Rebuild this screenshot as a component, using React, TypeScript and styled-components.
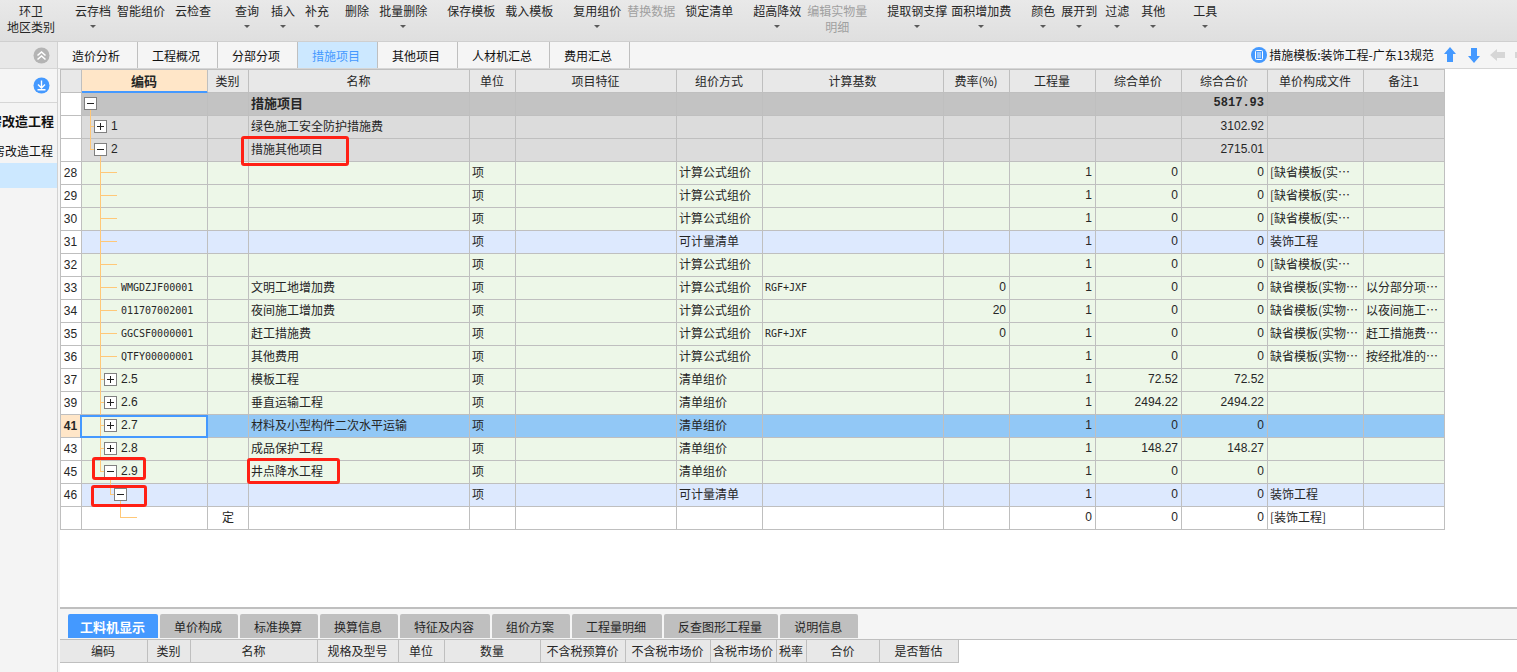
import React from 'react';
import styled, { createGlobalStyle, css } from 'styled-components';

const GlobalStyle = createGlobalStyle`
  *, *::before, *::after { box-sizing: border-box; }
  body {
    margin: 0;
    background: #f5f5f5;
    color: #262626;
    font: 12px/16px 'Noto Sans CJK SC', sans-serif;
  }
  button { font: inherit; color: inherit; background: none; border: 0; padding: 0; }
`;

const LINE = '#bfbfbf';
const BLUE = '#4499ff';
const ORANGE = '#ffc878';

const Page = styled.div`
  display: flex;
  flex-direction: column;
  min-height: 100vh;
  overflow: hidden;
`;

/* ---------- ribbon ---------- */

const Ribbon = styled.header`
  display: flex;
  align-items: flex-start;
  height: 42px;
  padding: 3px 0 0 7px;
  background: linear-gradient(#e9e9e9, #dfdfdf);
  border-bottom: 1px solid #cfcfcf;
`;

const RibbonButton = styled.button<{ $gap: number }>`
  flex: none;
  display: flex;
  flex-direction: column;
  align-items: center;
  margin-left: ${(p) => p.$gap}px;
  white-space: nowrap;
  &:disabled { color: #a0a0a0; }
`;

const Caret = styled.span`
  margin-top: 6px;
  border: 3px solid transparent;
  border-top-color: #5a5a5a;
  border-bottom: 0;
`;

type RibbonItem = { label: string; second?: string; caret?: boolean; off?: boolean; gap: number };

const ribbon: RibbonItem[] = [
  { label: '环卫', second: '地区类别', gap: 0 },
  { label: '云存档', caret: true, gap: 20 },
  { label: '智能组价', gap: 6 },
  { label: '云检查', gap: 10 },
  { label: '查询', caret: true, gap: 24 },
  { label: '插入', caret: true, gap: 12 },
  { label: '补充', caret: true, gap: 10 },
  { label: '删除', gap: 16 },
  { label: '批量删除', caret: true, gap: 10 },
  { label: '保存模板', gap: 20 },
  { label: '载入模板', gap: 10 },
  { label: '复用组价', caret: true, gap: 20 },
  { label: '替换数据', off: true, gap: 6 },
  { label: '锁定清单', gap: 10 },
  { label: '超高降效', caret: true, gap: 20 },
  { label: '编辑实物量', second: '明细', off: true, gap: 6 },
  { label: '提取钢支撑', caret: true, gap: 20 },
  { label: '面积增加费', caret: true, gap: 4 },
  { label: '颜色', caret: true, gap: 20 },
  { label: '展开到', caret: true, gap: 6 },
  { label: '过滤', caret: true, gap: 8 },
  { label: '其他', caret: true, gap: 12 },
  { label: '工具', caret: true, gap: 28 },
];

/* ---------- body frame ---------- */

const Body = styled.div`
  flex: 1;
  display: flex;
`;

const Sidebar = styled.aside`
  flex: none;
  width: 58px;
  background: #f4f4f4;
  border-right: 1px solid #d2d2d2;
`;

const SideHead = styled.div<{ $tall?: boolean }>`
  display: flex;
  align-items: center;
  justify-content: flex-end;
  height: ${(p) => (p.$tall ? 34 : 27)}px;
  padding-right: 7px;
  background: ${(p) => (p.$tall ? '#f5f5f5' : '#e8e8e8')};
  border-bottom: 1px solid #d6d6d6;
`;

const IconButton = styled.button`
  display: flex;
  svg { display: block; }
`;

const SideItem = styled.div<{ $bold?: boolean }>`
  display: flex;
  align-items: center;
  justify-content: flex-end;
  height: 30px;
  padding-top: 6px;
  padding-right: 4px;
  overflow: hidden;
  white-space: nowrap;
  color: #111;
  ${(p) => p.$bold && css`padding-right: 3px; font-size: 13px; font-weight: 700;`}
`;

const SideSelected = styled.div`
  height: 25px;
  background: #cce8ff;
`;

const Main = styled.main`
  flex: 1;
  min-width: 0;
  display: flex;
  flex-direction: column;
`;

/* ---------- page tabs ---------- */

const TabBar = styled.nav`
  display: flex;
  align-items: center;
  height: 27px;
  background: #f5f5f5;
  border-bottom: 1px solid #d6d6d6;
  overflow: hidden;
`;

const Tab = styled.button<{ $active?: boolean }>`
  flex: none;
  align-self: stretch;
  padding: 2px 17px 0 14px;
  border-right: 1px solid ${LINE};
  color: ${(p) => (p.$active ? BLUE : '#111')};
  background: ${(p) => (p.$active ? '#cce8ff' : 'transparent')};
`;

const TemplateTools = styled.div`
  flex: none;
  display: flex;
  align-items: center;
  margin-left: auto;
  margin-right: -13px;
  color: #111;
`;

const TemplateButton = styled.button`
  display: flex;
  align-items: center;
  gap: 2px;
  margin-right: 8px;
`;

const ArrowButton = styled.button`
  display: flex;
  margin-right: 8px;
  &:last-child { margin-right: 0; }
`;

const tabs = ['造价分析', '工程概况', '分部分项', '措施项目', '其他项目', '人材机汇总', '费用汇总'];

const ARROW = 'M8 0 L14 7 H11 V15 H5 V7 H2 Z';

const Arrow = ({ turn, color }: { turn: number; color: string }) => (
  <svg width="16" height="16" viewBox="0 0 16 16" aria-hidden="true">
    <path d={ARROW} fill={color} transform={`rotate(${turn} 8 8)`} />
  </svg>
);

/* ---------- main grid ---------- */

const GridPanel = styled.section`
  flex: 1;
  margin-left: 2px;
  background: #fff;
`;

const Grid = styled.table`
  width: 1385px;
  table-layout: fixed;
  border-collapse: separate;
  border-spacing: 0;
  border-left: 1px solid ${LINE};
`;

const HeadCell = styled.th<{ $current?: boolean }>`
  height: 24px;
  padding: 0 1px 1px 0;
  text-align: center;
  font-weight: 400;
  white-space: nowrap;
  background: #e8e8e8;
  border: solid ${LINE};
  border-width: 1px 1px 1px 0;
  ${(p) =>
    p.$current &&
    css`
      font-size: 13px;
      font-weight: 700;
      background: #ffe6c8;
      border-bottom-color: ${BLUE};
      box-shadow: inset 0 -1px ${BLUE};
    `}
`;

type Tone = 'root' | 'group' | 'green' | 'blue' | 'picked' | 'white';

const toneColor: Record<Tone, string> = {
  root: '#c3c3c3',
  group: '#dcdcdc',
  green: '#edf7e8',
  blue: '#dde9fe',
  picked: '#92c8f6',
  white: '#ffffff',
};

const Row = styled.tr<{ $tone: Tone }>`
  background: ${(p) => toneColor[p.$tone]};
  ${(p) => p.$tone === 'root' && css`font-size: 13px; font-weight: 700;`}
`;

const Cell = styled.td<{ $align?: 'left' | 'right' | 'center' }>`
  position: relative;
  height: 23px;
  padding: 0 2px 2px;
  text-align: ${(p) => p.$align || 'left'};
  white-space: nowrap;
  border: solid ${LINE};
  border-width: 0 1px 1px 0;
`;

const NumCell = styled(Cell)<{ $bold?: boolean }>`
  padding-right: 3px;
  font-family: ${(p) => (p.$bold ? "'Liberation Mono', monospace" : "'Liberation Sans', sans-serif")};
  font-size: 12px;
`;

const RowNumber = styled.th<{ $current?: boolean }>`
  height: 23px;
  padding: 0 1px 0 0;
  font: ${(p) => (p.$current ? 700 : 400)} 12px/16px 'Liberation Sans', sans-serif;
  background: ${(p) => (p.$current ? '#ffe6c8' : '#fff')};
  border: solid ${LINE};
  border-width: 0 1px 1px 0;
`;

const TreeCell = styled(Cell)<{ $focused?: boolean }>`
  padding: 0 0 0 2px;
  ${(p) =>
    p.$focused &&
    css`
      background: ${toneColor.green};
      &::after {
        content: '';
        position: absolute;
        z-index: 1;
        inset: 0 -1px -1px -2px;
        border: 2px solid ${BLUE};
      }
    `}
`;

const TreeLine = styled.div`
  display: flex;
  height: 22px;
`;

type Guide = 'blank' | 'tee' | 'corner';

const GuideBox = styled.span<{ $kind: Guide }>`
  position: relative;
  flex: none;
  width: 10px;
  ${(p) =>
    p.$kind !== 'blank' &&
    css`
      &::before {
        content: '';
        position: absolute;
        left: 6px;
        top: 0;
        width: 1px;
        height: ${p.$kind === 'tee' ? 23 : 11}px;
        background: ${ORANGE};
      }
      &::after {
        content: '';
        position: absolute;
        left: 6px;
        right: 0;
        top: 10px;
        height: 1px;
        background: ${ORANGE};
      }
    `}
`;

const LeafStub = styled.span`
  flex: none;
  width: 13px;
  height: 1px;
  margin-top: 10px;
  background: ${ORANGE};
`;

const Toggle = styled.button<{ $open: boolean }>`
  position: relative;
  flex: none;
  width: 13px;
  height: 13px;
  margin-top: 4px;
  && { background: #fff; border: 1px solid #808080; }
  svg { display: block; }
  ${(p) =>
    p.$open &&
    css`
      &::after {
        content: '';
        position: absolute;
        left: 5px;
        top: 12px;
        width: 1px;
        height: 6px;
        background: ${ORANGE};
      }
    `}
`;

const Code = styled.span<{ $long: boolean }>`
  margin-left: 4px;
  font: ${(p) =>
    p.$long ? "10px/21px 'DejaVu Sans Mono', monospace" : "12px/21px 'Liberation Sans', sans-serif"};
`;

const Formula = styled.span`
  font: 10px/16px 'DejaVu Sans Mono', monospace;
`;

/* red rectangle drawn over the cell it points at */
const Mark = styled.span<{ $box: [number, number, number, number] }>`
  position: absolute;
  z-index: 2;
  left: ${(p) => p.$box[0]}px;
  top: ${(p) => p.$box[1]}px;
  width: ${(p) => p.$box[2]}px;
  height: ${(p) => p.$box[3]}px;
  border: 3px solid #ff2015;
  border-radius: 3px;
  pointer-events: none;
`;

const columns: [string, number][] = [
  ['', 21], ['编码', 126], ['类别', 41], ['名称', 221], ['单位', 46], ['项目特征', 161],
  ['组价方式', 86], ['计算基数', 181], ['费率(%)', 66], ['工程量', 86], ['综合单价', 86],
  ['综合合价', 86], ['单价构成文件', 96], ['备注1', 81],
];

type Item = {
  no?: string;
  tone: Tone;
  guides: Guide[];
  toggle?: 'open' | 'closed';
  code?: string;
  kind?: string;
  name?: string;
  unit?: string;
  method?: string;
  base?: string;
  rate?: string;
  qty?: string;
  price?: string;
  total?: string;
  file?: string;
  note?: string;
  codeMark?: [number, number, number, number];
  nameMark?: [number, number, number, number];
};

const leaf = (no: string, rest: Partial<Item>): Item => ({
  no, tone: 'green', guides: ['blank', 'tee'], unit: '项', method: '计算公式组价',
  qty: '1', price: '0', total: '0', ...rest,
});

const section = (no: string, code: string, name: string, sum: string, rest: Partial<Item> = {}): Item => ({
  no, code, name, tone: 'green', guides: ['blank', 'tee'], toggle: 'closed', unit: '项',
  method: '清单组价', qty: '1', price: sum, total: sum, ...rest,
});

const shortFile = '[缺省模板(实…';
const longFile = '缺省模板(实物…';

const items: Item[] = [
  { tone: 'root', guides: [], toggle: 'open', name: '措施项目', total: '5817.93' },
  { tone: 'group', guides: ['tee'], toggle: 'closed', code: '1', name: '绿色施工安全防护措施费', total: '3102.92' },
  { tone: 'group', guides: ['corner'], toggle: 'open', code: '2', name: '措施其他项目', total: '2715.01', nameMark: [-8, -3, 108, 30] },
  leaf('28', { file: shortFile }),
  leaf('29', { file: shortFile }),
  leaf('30', { file: shortFile }),
  leaf('31', { tone: 'blue', method: '可计量清单', file: '装饰工程' }),
  leaf('32', { file: shortFile }),
  leaf('33', { code: 'WMGDZJF00001', name: '文明工地增加费', base: 'RGF+JXF', rate: '0', file: longFile, note: '以分部分项…' }),
  leaf('34', { code: '011707002001', name: '夜间施工增加费', rate: '20', file: longFile, note: '以夜间施工…' }),
  leaf('35', { code: 'GGCSF0000001', name: '赶工措施费', base: 'RGF+JXF', rate: '0', file: longFile, note: '赶工措施费…' }),
  leaf('36', { code: 'QTFY00000001', name: '其他费用', file: longFile, note: '按经批准的…' }),
  section('37', '2.5', '模板工程', '72.52'),
  section('39', '2.6', '垂直运输工程', '2494.22'),
  section('41', '2.7', '材料及小型构件二次水平运输', '0', { tone: 'picked' }),
  section('43', '2.8', '成品保护工程', '148.27'),
  section('45', '2.9', '井点降水工程', '0', {
    guides: ['blank', 'corner'], toggle: 'open', codeMark: [10, -4, 54, 23], nameMark: [-2, -3, 93, 26],
  }),
  section('46', '', '', '0', {
    tone: 'blue', guides: ['blank', 'blank', 'corner'], toggle: 'open', method: '可计量清单',
    file: '装饰工程', codeMark: [9, 1, 56, 22],
  }),
  { tone: 'white', guides: ['blank', 'blank', 'blank', 'corner'], kind: '定', qty: '0', price: '0', total: '0', file: '[装饰工程]' },
];

const ItemRow = ({ item }: { item: Item }) => {
  const picked = item.tone === 'picked';
  return (
    <Row $tone={item.tone}>
      <RowNumber scope="row" $current={picked}>{item.no}</RowNumber>
      <TreeCell $focused={picked}>
        <TreeLine>
          {item.guides.map((g, i) => <GuideBox key={i} $kind={g} />)}
          {item.toggle ? (
            <Toggle $open={item.toggle === 'open'} aria-label={item.toggle === 'open' ? '折叠' : '展开'}>
              <svg width="11" height="11" viewBox="0 0 11 11" aria-hidden="true">
                <path d="M2 5h7v1H2z" fill="#222" />
                {item.toggle === 'closed' && <path d="M5 2h1v7H5z" fill="#222" />}
              </svg>
            </Toggle>
          ) : (
            <LeafStub />
          )}
          {item.code && <Code $long={item.code.length > 3}>{item.code}</Code>}
        </TreeLine>
        {item.codeMark && <Mark $box={item.codeMark} />}
      </TreeCell>
      <Cell $align="center">{item.kind}</Cell>
      <Cell>
        {item.name}
        {item.nameMark && <Mark $box={item.nameMark} />}
      </Cell>
      <Cell>{item.unit}</Cell>
      <Cell />
      <Cell>{item.method}</Cell>
      <Cell>{item.base && <Formula>{item.base}</Formula>}</Cell>
      <NumCell $align="right">{item.rate}</NumCell>
      <NumCell $align="right">{item.qty}</NumCell>
      <NumCell $align="right">{item.price}</NumCell>
      <NumCell $align="right" $bold={item.tone === 'root'}>{item.total}</NumCell>
      <Cell>{item.file}</Cell>
      <Cell>{item.note}</Cell>
    </Row>
  );
};

/* ---------- detail panel ---------- */

const Detail = styled.section`
  flex: none;
  margin-left: 2px;
  min-height: 65px;
  background: #fff;
  border-top: 2px solid ${LINE};
`;

const DetailTabs = styled.nav`
  display: flex;
  gap: 2px;
  height: 31px;
  padding: 5px 8px 1px;
  background: #f5f5f5;
  border-bottom: 1px solid ${LINE};
`;

const DetailTab = styled.button<{ $active?: boolean }>`
  && {
    padding: 2px 16px 0 14px;
    background: ${LINE};
    border-radius: 2px 2px 0 0;
    white-space: nowrap;
    ${(p) =>
      p.$active &&
      css`
        padding: 2px 13px 0 12px;
        background: ${BLUE};
        color: #fff;
        font-size: 13px;
        font-weight: 700;
      `}
  }
`;

const DetailGrid = styled.table`
  width: 899px;
  table-layout: fixed;
  border-collapse: separate;
  border-spacing: 0;
`;

const DetailHead = styled(HeadCell)`
  height: 23px;
  border-top: 0;
`;

const detailTabs = ['工料机显示', '单价构成', '标准换算', '换算信息', '特征及内容', '组价方案', '工程量明细', '反查图形工程量', '说明信息'];

const detailColumns: [string, number][] = [
  ['编码', 88], ['类别', 43], ['名称', 127], ['规格及型号', 81], ['单位', 46], ['数量', 96],
  ['不含税预算价', 85], ['不含税市场价', 85], ['含税市场价', 66], ['税率', 30], ['合价', 73], ['是否暂估', 79],
];

export default function App() {
  return (
    <Page lang="zh-CN">
      <GlobalStyle />
      <Ribbon>
        {ribbon.map((b) => (
          <RibbonButton key={b.label} $gap={b.gap} disabled={b.off}>
            <span>{b.label}</span>
            {b.second && <span>{b.second}</span>}
            {b.caret && <Caret />}
          </RibbonButton>
        ))}
      </Ribbon>
      <Body>
        <Sidebar>
          <SideHead>
            <IconButton aria-label="收起">
              <svg width="17" height="17" viewBox="0 0 17 17" aria-hidden="true">
                <circle cx="8.5" cy="8.5" r="8" fill="#b4b4b4" />
                <path d="M4.5 8.5 8.5 5 12.5 8.5M4.5 12.5 8.5 9 12.5 12.5" fill="none" stroke="#fff" strokeWidth="1.6" />
              </svg>
            </IconButton>
          </SideHead>
          <SideHead $tall>
            <IconButton aria-label="下载">
              <svg width="17" height="17" viewBox="0 0 17 17" aria-hidden="true">
                <circle cx="8.5" cy="8.5" r="8" fill={BLUE} />
                <path d="M8.5 3.5v7M5 7.5 8.5 11 12 7.5M4.5 12.7h8" fill="none" stroke="#fff" strokeWidth="1.4" />
              </svg>
            </IconButton>
          </SideHead>
          <SideItem $bold>房改造工程</SideItem>
          <SideItem>房改造工程</SideItem>
          <SideSelected />
        </Sidebar>
        <Main>
          <TabBar>
            {tabs.map((t) => <Tab key={t} $active={t === '措施项目'}>{t}</Tab>)}
            <TemplateTools>
              <TemplateButton>
                <svg width="16" height="16" viewBox="0 0 16 16" aria-hidden="true">
                  <circle cx="8" cy="8" r="8" fill={BLUE} />
                  <rect x="4.5" y="3.5" width="7" height="9" rx="1" fill="none" stroke="#fff" />
                  <path d="M6 6h4M6 8h4M6 10h4" fill="none" stroke="#fff" strokeWidth="0.9" />
                </svg>
                措施模板:装饰工程-广东13规范
              </TemplateButton>
              <ArrowButton aria-label="上移"><Arrow turn={0} color={BLUE} /></ArrowButton>
              <ArrowButton aria-label="下移"><Arrow turn={180} color={BLUE} /></ArrowButton>
              <ArrowButton aria-label="升级"><Arrow turn={270} color="#d6d6d6" /></ArrowButton>
              <ArrowButton aria-label="降级"><Arrow turn={90} color="#d6d6d6" /></ArrowButton>
            </TemplateTools>
          </TabBar>
          <GridPanel>
            <Grid>
              <colgroup>
                {columns.map(([label, width]) => <col key={label} style={{ width }} />)}
              </colgroup>
              <thead>
                <tr>
                  {columns.map(([label]) => (
                    <HeadCell key={label} scope="col" $current={label === '编码'}>{label}</HeadCell>
                  ))}
                </tr>
              </thead>
              <tbody>
                {items.map((item, i) => <ItemRow key={i} item={item} />)}
              </tbody>
            </Grid>
          </GridPanel>
          <Detail>
            <DetailTabs>
              {detailTabs.map((t, i) => <DetailTab key={t} $active={i === 0}>{t}</DetailTab>)}
            </DetailTabs>
            <DetailGrid>
              <colgroup>
                {detailColumns.map(([label, width]) => <col key={label} style={{ width }} />)}
              </colgroup>
              <thead>
                <tr>
                  {detailColumns.map(([label]) => <DetailHead key={label} scope="col">{label}</DetailHead>)}
                </tr>
              </thead>
            </DetailGrid>
          </Detail>
        </Main>
      </Body>
    </Page>
  );
}
